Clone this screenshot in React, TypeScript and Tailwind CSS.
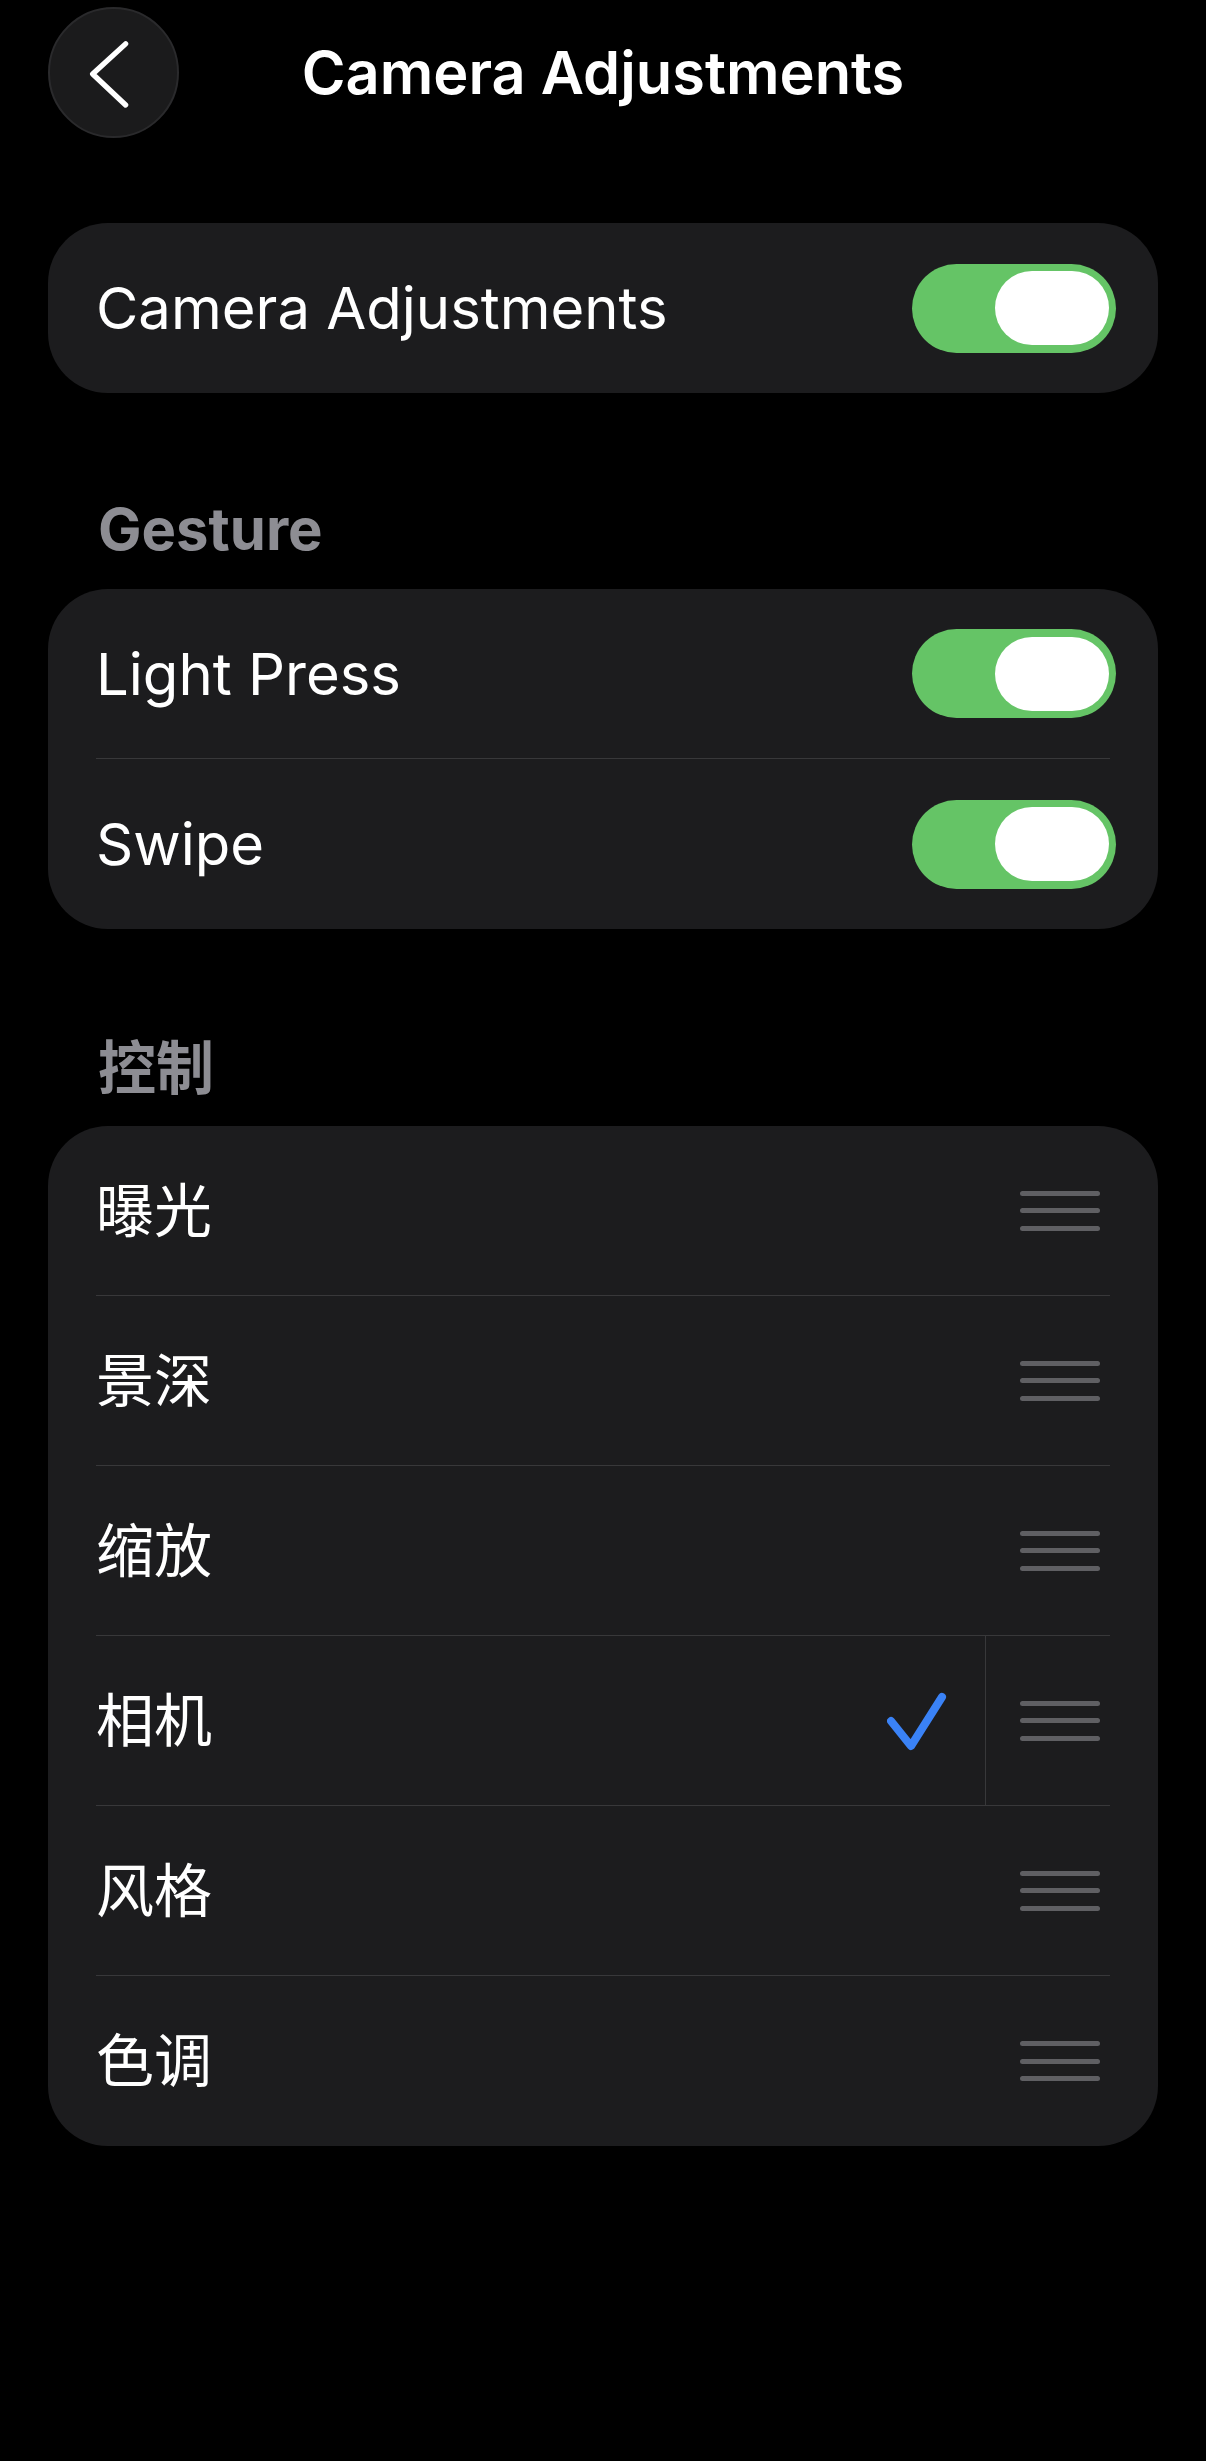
import React from "react";

function Toggle() {
  return (
    <div className="-mr-[6px] flex h-[89px] w-[204px] shrink-0 items-center justify-end rounded-full bg-[#65c466] pr-[7px]">
      <div className="h-[74px] w-[114px] rounded-full bg-white" />
    </div>
  );
}

function Handle() {
  return (
    <div className="mr-[10px] flex w-[80px] shrink-0 flex-col gap-[12.5px]">
      <div className="h-[5px] rounded-full bg-[#5f5f63]" />
      <div className="h-[5px] rounded-full bg-[#5f5f63]" />
      <div className="h-[5px] rounded-full bg-[#5f5f63]" />
    </div>
  );
}

function Check() {
  return (
    <svg width="60" height="60" viewBox="0 0 60 60" className="mr-[38px] shrink-0">
      <polyline
        points="4,30 24,55 55,6"
        fill="none"
        stroke="#3a82f6"
        strokeWidth="8"
        strokeLinecap="round"
        strokeLinejoin="round"
      />
    </svg>
  );
}

function Row({
  label,
  right,
  last,
}: {
  label: string;
  right: React.ReactNode;
  last?: boolean;
}) {
  return (
    <div className="px-[48px]">
      <div
        className={
          "flex h-[170px] items-center " +
          (last ? "" : "border-b border-[#38383a]")
        }
      >
        <span className="flex-1 text-[58px] leading-none text-white">{label}</span>
        {right}
      </div>
    </div>
  );
}

function CameraRow() {
  return (
    <div className="px-[48px]">
      <div className="flex h-[170px] items-stretch border-b border-[#38383a]">
        <div className="flex flex-1 items-center">
          <span className="flex-1 text-[58px] leading-none text-white">相机</span>
          <Check />
        </div>
        <div className="w-px bg-[#38383a]" />
        <div className="flex w-[124px] items-center justify-end">
          <Handle />
        </div>
      </div>
    </div>
  );
}

export default function App() {
  const controls = ["曝光", "景深", "缩放"];
  const controls2 = ["风格", "色调"];
  return (
    <div className="min-h-[2461px] bg-black font-['Inter','Noto_Sans_CJK_SC',sans-serif] text-white">
      {/* Header */}
      <div className="grid grid-cols-[131px_1fr_131px] items-center px-[48px] pt-[7px]">
        <div className="flex h-[131px] w-[131px] items-center justify-center rounded-full border-2 border-[#2a2a2c] bg-[#1b1b1c]">
          <svg width="131" height="131" viewBox="0 0 131 131">
            <polyline
              points="78,36 44,67 78,99"
              fill="none"
              stroke="white"
              strokeWidth="5.5"
              strokeLinecap="round"
              strokeLinejoin="round"
            />
          </svg>
        </div>
        <div className="text-center text-[59.5px] font-semibold leading-none">
          Camera Adjustments
        </div>
        <div />
      </div>

      <div className="px-[48px]">
        {/* Card 1 */}
        <div className="mt-[85px] overflow-hidden rounded-[60px] bg-[#1c1c1e]">
          <Row label="Camera Adjustments" right={<Toggle />} last />
        </div>

        {/* Gesture */}
        <div className="mt-[107px] px-[50px] text-[58px] font-bold leading-none text-[#8d8d93]">
          Gesture
        </div>
        <div className="mt-[31px] overflow-hidden rounded-[60px] bg-[#1c1c1e]">
          <Row label="Light Press" right={<Toggle />} />
          <Row label="Swipe" right={<Toggle />} last />
        </div>

        {/* 控制 */}
        <div className="mt-[110px] px-[50px] text-[58px] font-bold leading-none text-[#8d8d93]">
          控制
        </div>
        <div className="mt-[29px] overflow-hidden rounded-[60px] bg-[#1c1c1e]">
          {controls.map((c) => (
            <Row key={c} label={c} right={<Handle />} />
          ))}
          <CameraRow />
          {controls2.map((c, i) => (
            <Row key={c} label={c} right={<Handle />} last={i === controls2.length - 1} />
          ))}
        </div>
      </div>
    </div>
  );
}
